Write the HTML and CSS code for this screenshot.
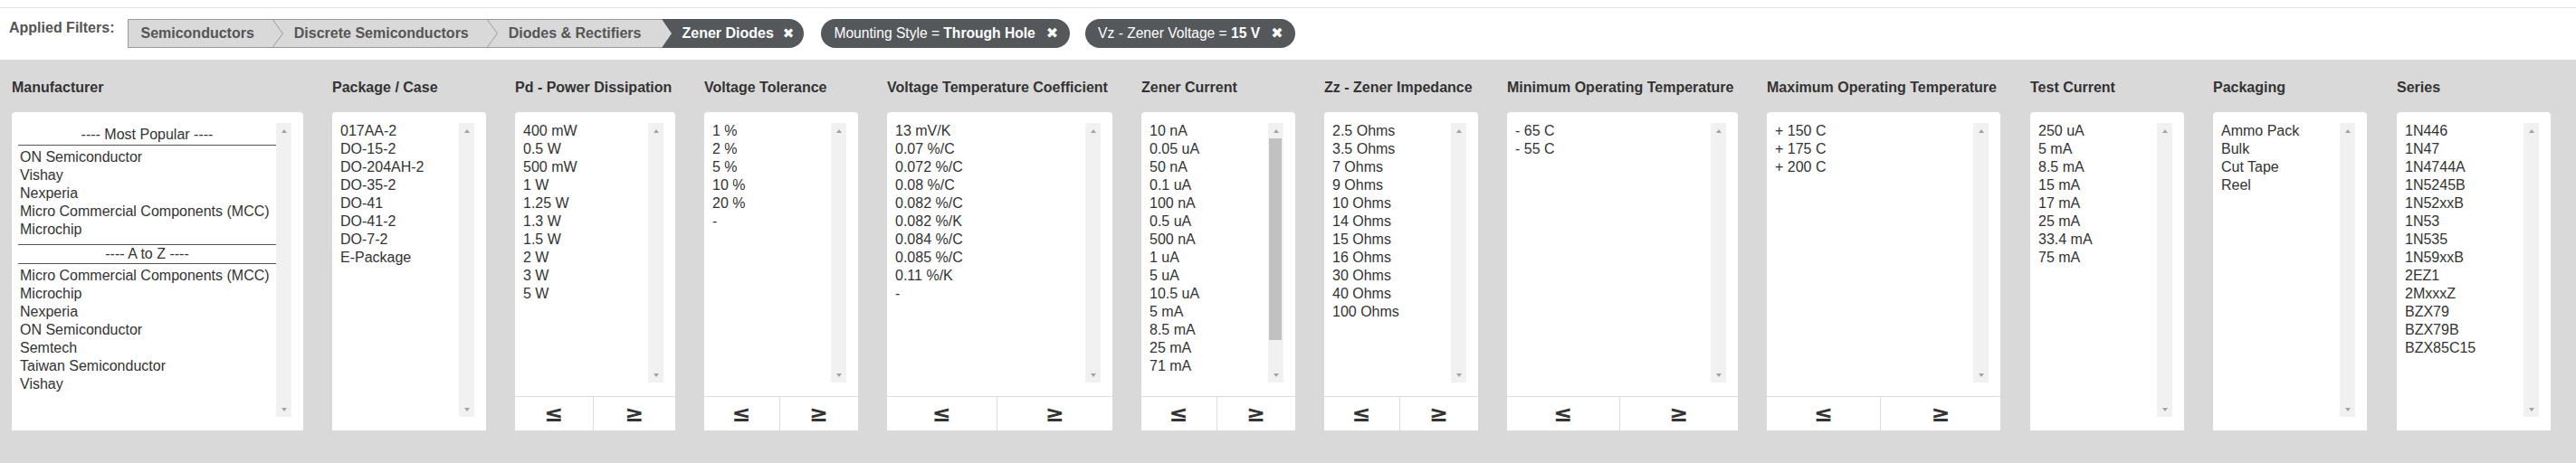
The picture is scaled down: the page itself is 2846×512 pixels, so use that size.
FILE: index.html
```html
<!DOCTYPE html>
<html lang="en">
<head>
<meta charset="utf-8">
<title>Zener Diodes – Filters</title>
<link rel="stylesheet" href="styles.css">
</head>
<body>
<div class="top">
  <div class="rule"></div>
  <div class="filters">
    <div class="label">Applied Filters:</div>
    <div class="crumbs">
      <span class="crumb first">Semiconductors</span>
      <svg class="chev" width="12" height="32" viewBox="0 0 12 32"><rect x="0" y="0" width="12" height="32" fill="#d9d9d9"/><line x1="0" y1="0.5" x2="12" y2="0.5" stroke="#999"/><line x1="0" y1="31.5" x2="12" y2="31.5" stroke="#999"/><polyline points="0.5,1 11.5,16 0.5,31" fill="none" stroke="#9a9a9a" stroke-width="1"/></svg>
      <span class="crumb">Discrete Semiconductors</span>
      <svg class="chev" width="12" height="32" viewBox="0 0 12 32"><rect x="0" y="0" width="12" height="32" fill="#d9d9d9"/><line x1="0" y1="0.5" x2="12" y2="0.5" stroke="#999"/><line x1="0" y1="31.5" x2="12" y2="31.5" stroke="#999"/><polyline points="0.5,1 11.5,16 0.5,31" fill="none" stroke="#9a9a9a" stroke-width="1"/></svg>
      <span class="crumb last">Diodes &amp; Rectifiers</span>
      <span class="crumb-active"><svg class="notch" width="11" height="32" viewBox="0 0 11 32"><polygon points="0,0 11,16 0,32" fill="#d9d9d9"/></svg><span class="ctext">Zener Diodes</span><span class="x">✖</span></span>
    </div>
    <span class="pill">Mounting Style = <b>Through Hole</b><span class="x">✖</span></span>
    <span class="pill">Vz - Zener Voltage = <b>15 V</b><span class="x">✖</span></span>
  </div>
</div>

<div class="section">
  <div class="col col-mfr">
    <div class="head">Manufacturer</div>
    <div class="panel">
      <div class="body">
        <div class="list">
          <div class="grp">---- Most Popular ----</div>
          <div class="it">ON Semiconductor</div>
          <div class="it">Vishay</div>
          <div class="it">Nexperia</div>
          <div class="it">Micro Commercial Components (MCC)</div>
          <div class="it">Microchip</div>
          <div class="grp grp2">---- A to Z ----</div>
          <div class="it">Micro Commercial Components (MCC)</div>
          <div class="it">Microchip</div>
          <div class="it">Nexperia</div>
          <div class="it">ON Semiconductor</div>
          <div class="it">Semtech</div>
          <div class="it">Taiwan Semiconductor</div>
          <div class="it">Vishay</div>
        </div>
        <div class="sb"><span class="up"></span><span class="track"></span><span class="dn"></span></div>
      </div>
    </div>
  </div>

  <div class="col">
    <div class="head">Package / Case</div>
    <div class="panel">
      <div class="body">
        <div class="list">
          <div class="it">017AA-2</div>
          <div class="it">DO-15-2</div>
          <div class="it">DO-204AH-2</div>
          <div class="it">DO-35-2</div>
          <div class="it">DO-41</div>
          <div class="it">DO-41-2</div>
          <div class="it">DO-7-2</div>
          <div class="it">E-Package</div>
        </div>
        <div class="sb"><span class="up"></span><span class="track"></span><span class="dn"></span></div>
      </div>
    </div>
  </div>

  <div class="col col-pd">
    <div class="head">Pd - Power Dissipation</div>
    <div class="panel">
      <div class="body">
        <div class="list">
          <div class="it">400 mW</div>
          <div class="it">0.5 W</div>
          <div class="it">500 mW</div>
          <div class="it">1 W</div>
          <div class="it">1.25 W</div>
          <div class="it">1.3 W</div>
          <div class="it">1.5 W</div>
          <div class="it">2 W</div>
          <div class="it">3 W</div>
          <div class="it">5 W</div>
        </div>
        <div class="sb"><span class="up"></span><span class="track"></span><span class="dn"></span></div>
      </div>
      <div class="btns"><span class="btn">≤</span><span class="btn">≥</span></div>
    </div>
  </div>

  <div class="col">
    <div class="head">Voltage Tolerance</div>
    <div class="panel">
      <div class="body">
        <div class="list">
          <div class="it">1 %</div>
          <div class="it">2 %</div>
          <div class="it">5 %</div>
          <div class="it">10 %</div>
          <div class="it">20 %</div>
          <div class="it">-</div>
        </div>
        <div class="sb"><span class="up"></span><span class="track"></span><span class="dn"></span></div>
      </div>
      <div class="btns"><span class="btn">≤</span><span class="btn">≥</span></div>
    </div>
  </div>

  <div class="col col-vtc">
    <div class="head">Voltage Temperature Coefficient</div>
    <div class="panel">
      <div class="body">
        <div class="list">
          <div class="it">13 mV/K</div>
          <div class="it">0.07 %/C</div>
          <div class="it">0.072 %/C</div>
          <div class="it">0.08 %/C</div>
          <div class="it">0.082 %/C</div>
          <div class="it">0.082 %/K</div>
          <div class="it">0.084 %/C</div>
          <div class="it">0.085 %/C</div>
          <div class="it">0.11 %/K</div>
          <div class="it">-</div>
        </div>
        <div class="sb"><span class="up"></span><span class="track"></span><span class="dn"></span></div>
      </div>
      <div class="btns"><span class="btn">≤</span><span class="btn">≥</span></div>
    </div>
  </div>

  <div class="col">
    <div class="head">Zener Current</div>
    <div class="panel">
      <div class="body">
        <div class="list">
          <div class="it">10 nA</div>
          <div class="it">0.05 uA</div>
          <div class="it">50 nA</div>
          <div class="it">0.1 uA</div>
          <div class="it">100 nA</div>
          <div class="it">0.5 uA</div>
          <div class="it">500 nA</div>
          <div class="it">1 uA</div>
          <div class="it">5 uA</div>
          <div class="it">10.5 uA</div>
          <div class="it">5 mA</div>
          <div class="it">8.5 mA</div>
          <div class="it">25 mA</div>
          <div class="it">71 mA</div>
        </div>
        <div class="sb"><span class="up"></span><span class="track"><span class="thumb"></span></span><span class="dn"></span></div>
      </div>
      <div class="btns"><span class="btn">≤</span><span class="btn">≥</span></div>
    </div>
  </div>

  <div class="col">
    <div class="head">Zz - Zener Impedance</div>
    <div class="panel">
      <div class="body">
        <div class="list">
          <div class="it">2.5 Ohms</div>
          <div class="it">3.5 Ohms</div>
          <div class="it">7 Ohms</div>
          <div class="it">9 Ohms</div>
          <div class="it">10 Ohms</div>
          <div class="it">14 Ohms</div>
          <div class="it">15 Ohms</div>
          <div class="it">16 Ohms</div>
          <div class="it">30 Ohms</div>
          <div class="it">40 Ohms</div>
          <div class="it">100 Ohms</div>
        </div>
        <div class="sb"><span class="up"></span><span class="track"></span><span class="dn"></span></div>
      </div>
      <div class="btns"><span class="btn">≤</span><span class="btn">≥</span></div>
    </div>
  </div>

  <div class="col col-min">
    <div class="head">Minimum Operating Temperature</div>
    <div class="panel">
      <div class="body">
        <div class="list">
          <div class="it">- 65 C</div>
          <div class="it">- 55 C</div>
        </div>
        <div class="sb"><span class="up"></span><span class="track"></span><span class="dn"></span></div>
      </div>
      <div class="btns"><span class="btn">≤</span><span class="btn">≥</span></div>
    </div>
  </div>

  <div class="col col-max">
    <div class="head">Maximum Operating Temperature</div>
    <div class="panel">
      <div class="body">
        <div class="list">
          <div class="it">+ 150 C</div>
          <div class="it">+ 175 C</div>
          <div class="it">+ 200 C</div>
        </div>
        <div class="sb"><span class="up"></span><span class="track"></span><span class="dn"></span></div>
      </div>
      <div class="btns"><span class="btn">≤</span><span class="btn">≥</span></div>
    </div>
  </div>

  <div class="col col-gap">
    <div class="head">Test Current</div>
    <div class="panel">
      <div class="body">
        <div class="list">
          <div class="it">250 uA</div>
          <div class="it">5 mA</div>
          <div class="it">8.5 mA</div>
          <div class="it">15 mA</div>
          <div class="it">17 mA</div>
          <div class="it">25 mA</div>
          <div class="it">33.4 mA</div>
          <div class="it">75 mA</div>
        </div>
        <div class="sb"><span class="up"></span><span class="track"></span><span class="dn"></span></div>
      </div>
    </div>
  </div>

  <div class="col">
    <div class="head">Packaging</div>
    <div class="panel">
      <div class="body">
        <div class="list">
          <div class="it">Ammo Pack</div>
          <div class="it">Bulk</div>
          <div class="it">Cut Tape</div>
          <div class="it">Reel</div>
        </div>
        <div class="sb"><span class="up"></span><span class="track"></span><span class="dn"></span></div>
      </div>
    </div>
  </div>

  <div class="col col-gap">
    <div class="head">Series</div>
    <div class="panel">
      <div class="body">
        <div class="list">
          <div class="it">1N446</div>
          <div class="it">1N47</div>
          <div class="it">1N4744A</div>
          <div class="it">1N5245B</div>
          <div class="it">1N52xxB</div>
          <div class="it">1N53</div>
          <div class="it">1N535</div>
          <div class="it">1N59xxB</div>
          <div class="it">2EZ1</div>
          <div class="it">2MxxxZ</div>
          <div class="it">BZX79</div>
          <div class="it">BZX79B</div>
          <div class="it">BZX85C15</div>
        </div>
        <div class="sb"><span class="up"></span><span class="track"></span><span class="dn"></span></div>
      </div>
    </div>
  </div>
</div>
</body>
</html>
```

FILE: styles.css
```css
* { box-sizing: border-box; }

html, body {
  margin: 0;
  padding: 0;
  background: #ffffff;
  font-family: "Liberation Sans", Arial, sans-serif;
  font-size: 16px;
  color: #333333;
}

body { width: 2846px; height: 512px; overflow: hidden; }

/* ---------- top applied-filters strip ---------- */
.top {
  height: 66px;
  padding-top: 8px;
}

.rule {
  height: 1px;
  background: #e2e2e2;
}

.filters {
  display: flex;
  align-items: flex-start;
  margin-top: 12px;
  padding-left: 10px;
  height: 32px;
}

.label {
  font-weight: bold;
  color: #555555;
  line-height: 20px;
  margin-right: 15px;
  white-space: nowrap;
}

.crumbs {
  display: flex;
  align-items: stretch;
  height: 32px;
}

.crumb {
  display: flex;
  align-items: center;
  height: 32px;
  background: #d9d9d9;
  border-top: 1px solid #999999;
  border-bottom: 1px solid #999999;
  color: #555555;
  font-weight: bold;
  white-space: nowrap;
  padding: 0 20px 0 12px;
}

.crumb.first {
  border-left: 1px solid #999999;
  padding-left: 13px;
}

.crumb.last { padding-right: 23px; }

.chev { display: block; flex: none; }

.crumb-active {
  display: flex;
  align-items: center;
  height: 32px;
  background: #54585b;
  color: #ffffff;
  font-weight: bold;
  border-radius: 0 16px 16px 0;
  padding-right: 11px;
  white-space: nowrap;
}

.notch { display: block; flex: none; margin-right: 11px; }

.x {
  font-family: "DejaVu Sans", sans-serif;
  font-size: 15px;
  font-weight: bold;
  color: #ffffff;
  margin-left: 10px;
  line-height: 1;
}

.pill {
  display: flex;
  align-items: center;
  height: 32px;
  border-radius: 16px;
  background: #54585b;
  color: #ffffff;
  font-size: 15.6px;
  padding: 0 13px 0 14px;
  margin-left: 19px;
  white-space: pre;
}

.pill + .pill { margin-left: 17px; }

.pill .x { font-size: 16px; margin-left: 12px; }

.pill b { font-weight: bold; }

/* ---------- filter columns ---------- */
.section {
  background: #d9d9d9;
  height: 446px;
  padding: 21px 13px 0 13px;
  display: flex;
  align-items: flex-start;
  gap: 32px;
}

.col {
  display: flex;
  flex-direction: column;
  width: 170px;
  flex: none;
}

.col-mfr { width: 322px; }
.col-pd  { width: 177px; }
.col-vtc { width: 249px; }
.col-min { width: 255px; }
.col-max { width: 258px; }
.col-gap { margin-left: 1px; }

.head {
  font-weight: bold;
  color: #333333;
  line-height: 20px;
  white-space: nowrap;
  margin-bottom: 17px;
}

.panel {
  background: #ffffff;
  border-radius: 4px 4px 0 0;
  height: 352px;
  display: flex;
  flex-direction: column;
}

.body {
  flex: 1;
  display: flex;
  padding: 12px 13px 15px 7px;
  min-height: 0;
}

.list {
  flex: 1;
  overflow: hidden;
  margin-top: -1px;
}

.it {
  line-height: 20px;
  padding-left: 2px;
  white-space: nowrap;
  color: #333333;
}

.grp {
  text-align: center;
  line-height: 20px;
  padding-top: 4px;
  padding-bottom: 1px;
  border-bottom: 1px solid #555555;
  margin-bottom: 3px;
  color: #333333;
  white-space: nowrap;
}

.grp2 {
  border-top: 1px solid #555555;
  padding-top: 0;
  padding-bottom: 0;
  margin-top: 6px;
}

/* fake scrollbar */
.sb {
  width: 17px;
  flex: none;
  background: #f1f1f1;
  display: flex;
  flex-direction: column;
}

.up, .dn {
  height: 17px;
  flex: none;
  display: flex;
  align-items: center;
  justify-content: center;
}

.up::before {
  content: "";
  border-left: 3.5px solid transparent;
  border-right: 3.5px solid transparent;
  border-bottom: 4px solid #a3a3a3;
}

.dn::before {
  content: "";
  border-left: 3.5px solid transparent;
  border-right: 3.5px solid transparent;
  border-top: 4px solid #a3a3a3;
}

.track { flex: 1; display: block; }

.thumb {
  display: block;
  height: 223px;
  margin: 0 2px 0 1px;
  background: #c1c1c1;
}

/* range buttons */
.btns {
  height: 38px;
  flex: none;
  border-top: 1px solid #dddddd;
  display: grid;
  grid-template-columns: 48.6% 1fr;
}

.btn {
  display: flex;
  align-items: center;
  justify-content: center;
  font-family: "DejaVu Sans", sans-serif;
  font-size: 25px;
  font-weight: bold;
  color: #333333;
  line-height: 1;
}

.btn + .btn { border-left: 1px solid #dddddd; }
```
